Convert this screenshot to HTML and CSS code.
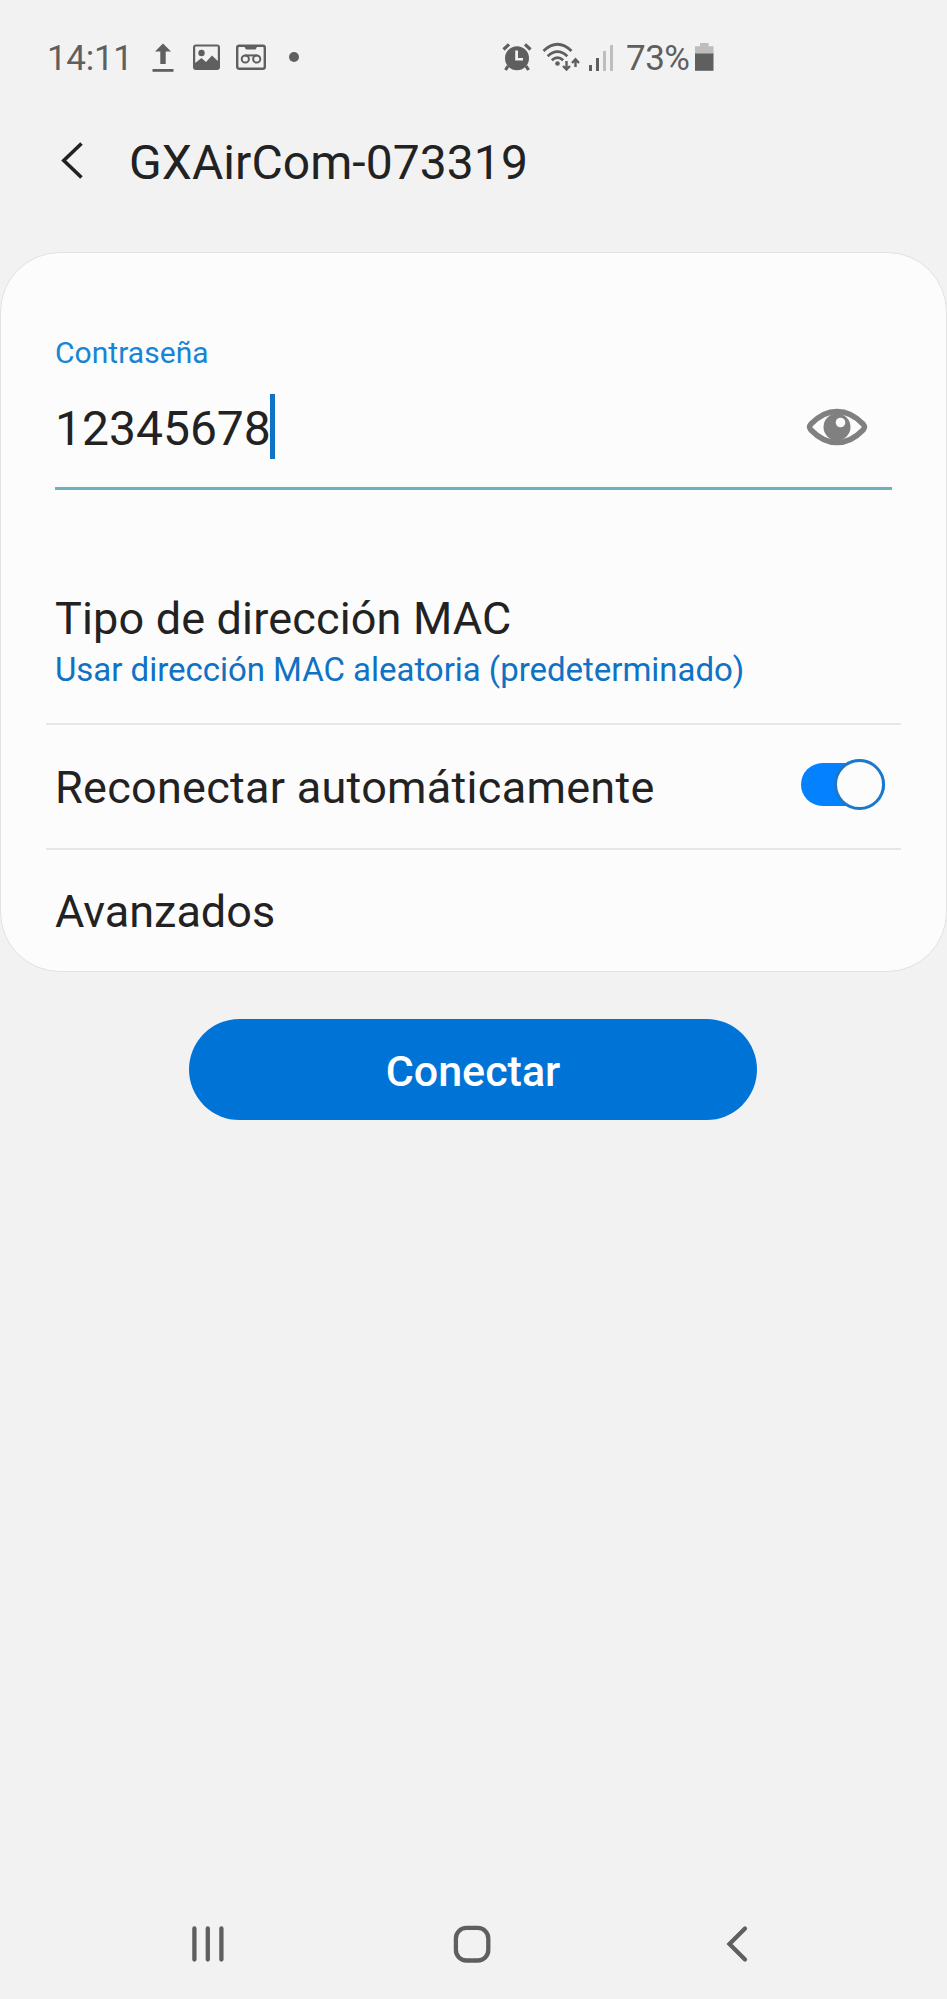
FILE: index.html
```html
<!DOCTYPE html>
<html lang="es">
<head>
<meta charset="utf-8">
<title>GXAirCom-073319</title>
<link rel="stylesheet" href="styles.css">
</head>
<body>
<div class="screen">
  <div class="status">
    <div class="status-left">
      <span class="clock">14:11</span>
      <svg class="i-upload" width="22" height="33" viewBox="0 0 22 33"><path d="M11 1.500 19 9.500H13.700V22H8.300V9.500H3z"/><path d="M.5 27H21.500V29.800H.5z"/></svg>
      <svg class="i-photo" width="27" height="33" viewBox="0 0 27 33"><path fill-rule="evenodd" d="M3 2.500H24Q27 2.500 27 5.500V25Q27 28 24 28H3Q0 28 0 25V5.500Q0 2.500 3 2.500zM2.200 4.500V21L8.500 16 13 20 19 13.500 24.800 19V4.500z"/><circle cx="8.500" cy="11" r="3.200"/></svg>
      <svg class="i-tape" width="30" height="33" viewBox="0 0 30 33"><g class="line"><rect x="1.200" y="3.700" width="27.600" height="23" rx="2" stroke-width="2.400"/><circle cx="9.300" cy="17" r="3.600" stroke-width="2"/><circle cx="20.700" cy="17" r="3.600" stroke-width="2"/><path d="M9 13.400H21" stroke-width="2"/></g><path d="M8 4H21.500L19.500 7.500H10z"/></svg>
      <span class="dot"></span>
    </div>
    <div class="status-right">
      <svg class="i-alarm" width="30" height="33" viewBox="0 0 30 33"><path fill-rule="evenodd" d="M15 4.200A12 12 0 1 0 15 28.200 12 12 0 1 0 15 4.200zM13.200 8.500H16V16H21V18.500H13.200z"/><g class="line" stroke-width="3.200"><path d="M1.500 7.500 7 2.300M28.500 7.500 23 2.300"/><path d="M6 24 3.500 28M24 24 26.500 28"/></g></svg>
      <svg class="i-wifi" width="38" height="33" viewBox="0 0 38 33"><g class="line" stroke-width="2.800"><path d="M1.500 9Q15.500-4.500 29.500 9"/><path d="M5.700 14.200Q15.500 5 25.300 14.200"/><path d="M9.800 18.200Q15.500 13 21.200 18.200"/></g><circle cx="15.500" cy="21.500" r="2.300"/><g class="line" stroke-width="2.400"><path d="M24.500 19V27M21 24 24.500 27.500 28 24M33.500 25V17.500M30 21 33.500 17.300 37 21"/></g></svg>
      <svg class="i-signal" width="25" height="33" viewBox="0 0 25 33"><path d="M0 23H3V29H0zM7 16H10V29H7z"/><path class="faint" d="M14 9H17V29H14zM21 3H24V29H21z"/></svg>
      <span class="battery-text">73%</span>
      <svg class="i-battery" width="19" height="33" viewBox="0 0 19 33"><path class="faint" d="M5 1H13.500V4.200H18.500V12H0V4.200H5z"/><path d="M0 11.500H18.500V28.800H0z"/></svg>
    </div>
  </div>

  <header class="header">
    <svg class="back" width="24" height="40" viewBox="0 0 24 40"><path d="M21.500 2.500 3.800 19.500 21.500 36.500"/></svg>
    <h1 class="title">GXAirCom-073319</h1>
  </header>

  <main class="card">
    <div class="field">
      <label class="label">Contraseña</label>
      <div class="input">
        <span class="value">12345678</span><span class="caret"></span>
        <svg class="eye" width="62" height="40" viewBox="0 0 62 40"><path class="outline" d="M3.500 20Q3.500 19 5 17Q17 4.500 31 4.500T57 17Q58.500 19 58.500 20T57 23Q45 35.500 31 35.500T5 23Q3.500 21 3.500 20z"/><circle cx="31" cy="20" r="13.500"/><circle class="glint" cx="34.500" cy="15.500" r="4.800"/></svg>
      </div>
    </div>
    <div class="mac">
      <div class="item mac-title">Tipo de dirección MAC</div>
      <div class="sub">Usar dirección MAC aleatoria (predeterminado)</div>
    </div>
    <div class="row">
      <span class="item reconnect">Reconectar automáticamente</span>
      <span class="switch"><span class="thumb"></span></span>
    </div>
    <div class="row">
      <span class="item">Avanzados</span>
    </div>
  </main>

  <button class="connect">Conectar</button>

  <nav class="nav">
    <svg width="34" height="40" viewBox="0 0 34 40"><path d="M4.400 4.500V35.500M17.800 4.500V35.500M31.400 4.500V35.500"/></svg>
    <svg class="home" width="40" height="40" viewBox="0 0 40 40"><rect x="3.900" y="3.900" width="32.400" height="32.600" rx="10.500"/></svg>
    <svg width="24" height="40" viewBox="0 0 24 40"><path d="M20 4.500 4.500 20 20 35.500"/></svg>
  </nav>
</div>
</body>
</html>
```
FILE: styles.css
```css
* { box-sizing: border-box; }
body {
  margin: 0;
  background: #f2f2f2;
  color: #222;
  font-family: Roboto, "Liberation Sans", sans-serif;
}
svg { display: block; flex: none; fill: #5f5f5f; }
.line { fill: none; stroke: #5f5f5f; }
.faint { fill: #bdbdbd; }
.screen { display: flex; flex-direction: column; height: 1999px; overflow: hidden; }

.status { display: flex; height: 117px; color: #5f5f5f; font-size: 35px; }
.status-left, .status-right { display: flex; align-items: center; }
.status-left { width: 502px; padding-left: 47px; }
.clock { width: 105px; letter-spacing: -.3px; white-space: nowrap; }
.i-photo { margin-left: 19px; }
.i-tape { margin-left: 16px; }
.dot { width: 10px; height: 10px; margin: 0 0 3px 23px; border-radius: 50%; background: #5f5f5f; }
.i-wifi { margin-left: 10px; }
.i-signal { margin-left: 9px; }
.battery-text { width: 69px; margin-left: 12px; letter-spacing: -.5px; white-space: nowrap; }

.header { display: flex; align-items: center; height: 92px; padding-left: 60px; }
.back { margin-bottom: 5px; fill: none; stroke: #222; stroke-width: 3.600; }
.title { margin: 0 0 0 45px; font-size: 48px; font-weight: 400; line-height: 60px; letter-spacing: .07px; white-space: nowrap; }

.card {
  height: 720px;
  margin-top: 43px;
  padding: 82px 45px 0;
  border: 1px solid #e2e2e2;
  border-radius: 60px;
  background: #fcfcfc;
}
.field { margin: 0 9px; border-bottom: 3px solid #6cb3bf; }
.label { display: block; height: 36px; color: #1685d6; font-size: 30px; line-height: 36px; letter-spacing: .05px; white-space: nowrap; }
.input { display: flex; align-items: center; height: 116px; font-size: 48px; }
.value { margin-bottom: 2px; }
.caret { width: 5px; height: 65px; margin: 0 0 6px -1px; background: #0f72c4; }
.eye { margin: 0 24px 4px auto; fill: #808080; }
.outline { fill: none; stroke: #808080; stroke-width: 5.500; }
.glint { fill: #fcfcfc; }
.mac { height: 235px; padding: 104px 9px 0; border-bottom: 2px solid #e6e6e6; }
.item { font-size: 45px; line-height: 50px; white-space: nowrap; }
.mac-title { height: 56px; letter-spacing: .16px; }
.reconnect { letter-spacing: .28px; }
.sub { color: #0f72c4; font-size: 33px; line-height: 40px; letter-spacing: -.03px; white-space: nowrap; }
.row { display: flex; align-items: center; justify-content: space-between; height: 123px; padding: 2px 16px 0 9px; }
.row + .row { height: 124px; border-top: 2px solid #e6e6e6; }
.switch { display: flex; align-items: center; justify-content: flex-end; width: 84px; height: 43px; margin-bottom: 6px; border-radius: 22px; background: #0381fe; }
.thumb { flex: none; width: 51px; height: 51px; border: 3px solid #1c78cd; border-radius: 50%; background: #fcfcfc; }

.connect {
  align-self: center;
  width: 568px;
  height: 101px;
  margin: 47px 1px 0 0;
  padding: 2px 0 0;
  border: 0;
  border-radius: 51px;
  background: #0074d6;
  color: #fff;
  font: 500 43px/50px Roboto, sans-serif;
}
.nav { display: flex; align-items: center; justify-content: space-between; margin-top: auto; height: 111px; padding: 0 198px 0 190px; }
.nav svg { fill: none; stroke: #5f5f5f; stroke-width: 4.300; stroke-linecap: round; }
.nav .home { margin-right: 5px; }
```
